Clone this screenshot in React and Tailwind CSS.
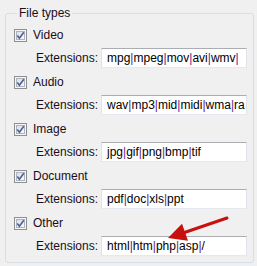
const fileTypes = [
  { name: "Video", exts: "mpg|mpeg|mov|avi|wmv|" },
  { name: "Audio", exts: "wav|mp3|mid|midi|wma|ra" },
  { name: "Image", exts: "jpg|gif|png|bmp|tif" },
  { name: "Document", exts: "pdf|doc|xls|ppt" },
  { name: "Other", exts: "html|htm|php|asp|/" },
];

// Windows 7 style checked box
const CheckBox = () => (
  <svg width="13" height="13" viewBox="0 0 13 13" className="shrink-0">
    <defs>
      <linearGradient id="cbfill" x1="0" y1="0" x2="1" y2="1">
        <stop offset="0" stopColor="#d9dde3" />
        <stop offset="1" stopColor="#fbfbfb" />
      </linearGradient>
    </defs>
    <rect x="0.5" y="0.5" width="12" height="12" fill="#f6f6f6" stroke="#8e8f8f" />
    <rect x="2.5" y="2.5" width="8" height="8" fill="url(#cbfill)" stroke="#aeb4bd" />
    <path d="M3.3 6.6 L5.4 9.2 L9.8 3.2" fill="none" stroke="#4a5d99" strokeWidth="1.6" />
  </svg>
);

// pipes look purple-ish in the ClearType screenshot
const ExtText = ({ text }) => {
  const parts = text.split("|");
  return (
    <span className="whitespace-nowrap">
      {parts.map((p, i) => (
        <span key={i}>
          {p}
          {i < parts.length - 1 && <span className="text-[#6a1b8a]">|</span>}
        </span>
      ))}
    </span>
  );
};

export default function App() {
  return (
    <div
      className="relative w-[257px] h-[266px] bg-[#f0f0f0] overflow-hidden text-[12px] text-[#1c0c18]"
      style={{ fontFamily: '"Liberation Sans", Arial, sans-serif' }}
    >
      <fieldset className="ml-[5px] mt-[5px] w-[249px] h-[258px] border border-[#d5dfe5] rounded-[3px] pl-[8px] pt-[6px]">
        <legend className="ml-[3px] px-[2px] leading-[16px]">File types</legend>
        <div className="flex flex-col gap-[6px]">
          {fileTypes.map((ft) => (
            <div key={ft.name} className="flex flex-col gap-[4px]">
              <label className="flex items-center h-[17px]">
                <CheckBox />
                <span className="ml-[6px] leading-[17px]">{ft.name}</span>
              </label>
              <div className="flex items-center h-[20px] pl-[22px]">
                <span className="w-[65px] shrink-0">Extensions:</span>
                <div className="w-[146px] h-[20px] bg-white border border-[#e2e3ea] border-t-[#abadb3] border-b-[#e3e9ef] pl-[5px] leading-[18px] overflow-hidden text-black">
                  <ExtText text={ft.exts} />
                </div>
              </div>
            </div>
          ))}
        </div>
      </fieldset>

      {/* red annotation arrow */}
      <svg className="absolute inset-0 pointer-events-none" width="257" height="266">
        <line x1="227" y1="218" x2="183" y2="233" stroke="#c8100f" strokeWidth="3" strokeLinecap="round" />
        <polygon points="168,238 188,240.7 182,223.7" fill="#c8100f" />
      </svg>
    </div>
  );
}
